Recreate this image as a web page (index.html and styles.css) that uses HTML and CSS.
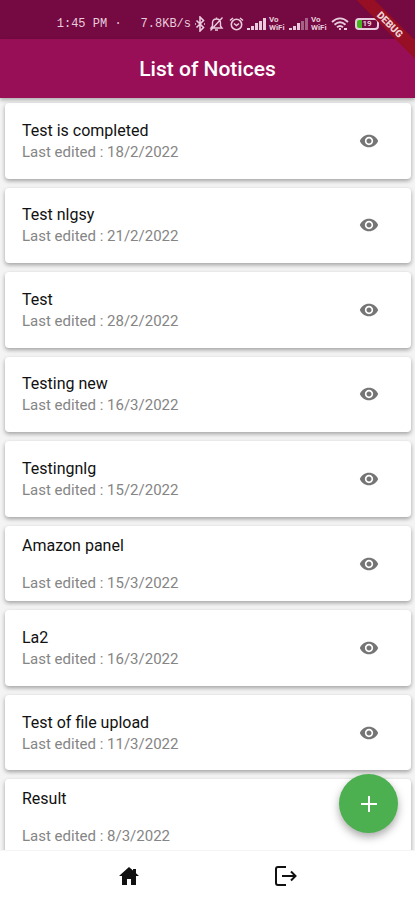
FILE: index.html
```html
<!DOCTYPE html>
<html lang="en">
<head>
  <meta charset="UTF-8">
  <meta name="viewport" content="width=device-width, initial-scale=1">
  <title>List of Notices</title>
  <link rel="stylesheet" href="styles.css">
</head>
<body>
  <!-- shared icons -->
  <svg class="sprite" aria-hidden="true">
    <symbol id="eye" viewBox="0 0 24 24">
      <path d="M12 4.5C7 4.5 2.73 7.61 1 12c1.73 4.39 6 7.5 11 7.5s9.27-3.11 11-7.5c-1.73-4.39-6-7.5-11-7.5zM12 17c-2.76 0-5-2.24-5-5s2.24-5 5-5 5 2.24 5 5-2.24 5-5 5zm0-8c-1.66 0-3 1.34-3 3s1.34 3 3 3 3-1.34 3-3-1.34-3-3-3z"/>
    </symbol>
  </svg>

  <div class="status-bar">
    <span class="clock">1:45 PM ·</span>
    <span class="speed">7.8KB/s</span>
    <svg class="bluetooth" width="12" height="16" viewBox="0 0 12 16" fill="none" stroke="currentColor" stroke-width="1.6">
      <path d="M2.5 4.5l7 7L6 15V1l3.500 3.500-7 7M1 8h1M10 8h1"/>
    </svg>
    <svg width="15" height="16" viewBox="0 0 15 16" fill="none" stroke="currentColor" stroke-width="1.400">
      <path d="M2 12h11l-1.500-2V7c0-2.500-1.500-4-4-4s-4 1.500-4 4v3zM7.500 1.500V3M6 14h3M1.500 14.500l12-13"/>
    </svg>
    <svg class="alarm" width="15" height="16" viewBox="0 0 15 16" fill="none" stroke="currentColor" stroke-width="1.600">
      <circle cx="7.500" cy="8.500" r="5.200"/>
      <path d="M1 4.500L4 2M14 4.500L11 2M5 7.500l2.500 2 2.500-2"/>
    </svg>
    <svg width="19" height="14" viewBox="0 0 19 14" fill="currentColor">
      <path d="M0 11h3v2H0zM4 9h3v4H4zM8 6h3v7H8zM12 4h3v9h-3zM16 1h3v12h-3z"/>
    </svg>
    <span class="vo">Vo<br>WiFi</span>
    <svg width="19" height="14" viewBox="0 0 19 14" fill="currentColor">
      <path d="M0 11h3v2H0zM4 9h3v4H4zM8 6h3v7H8z"/>
      <path d="M12 4h3v9h-3zM16 1h3v12h-3z" opacity=".45"/>
    </svg>
    <span class="vo">Vo<br>WiFi</span>
    <svg class="wifi" width="18" height="14" viewBox="0 0 18 14" fill="none" stroke="currentColor" stroke-width="1.900">
      <path d="M1 5c5-4.700 11-4.700 16 0M3.500 7.800c3.500-3.200 7.500-3.200 11 0M6 10.300c2-1.700 4-1.700 6 0"/>
      <path d="M9 11v2M13 12h3"/>
    </svg>
    <span class="battery">19</span>
  </div>
  <div class="debug"><span>DEBUG</span></div>

  <header class="app-bar">
    <h1>List of Notices</h1>
  </header>

  <main>
    <ul class="notices">
      <li class="card">
        <div class="text"><h2>Test is completed</h2><p>Last edited : 18/2/2022</p></div>
        <button class="view" aria-label="View notice"><svg><use href="#eye"/></svg></button>
      </li>
      <li class="card">
        <div class="text"><h2>Test nlgsy</h2><p>Last edited : 21/2/2022</p></div>
        <button class="view" aria-label="View notice"><svg><use href="#eye"/></svg></button>
      </li>
      <li class="card">
        <div class="text"><h2>Test</h2><p>Last edited : 28/2/2022</p></div>
        <button class="view" aria-label="View notice"><svg><use href="#eye"/></svg></button>
      </li>
      <li class="card">
        <div class="text"><h2>Testing new</h2><p>Last edited : 16/3/2022</p></div>
        <button class="view" aria-label="View notice"><svg><use href="#eye"/></svg></button>
      </li>
      <li class="card">
        <div class="text"><h2>Testingnlg</h2><p>Last edited : 15/2/2022</p></div>
        <button class="view" aria-label="View notice"><svg><use href="#eye"/></svg></button>
      </li>
      <li class="card spaced">
        <div class="text"><h2>Amazon panel</h2><p>Last edited : 15/3/2022</p></div>
        <button class="view" aria-label="View notice"><svg><use href="#eye"/></svg></button>
      </li>
      <li class="card">
        <div class="text"><h2>La2</h2><p>Last edited : 16/3/2022</p></div>
        <button class="view" aria-label="View notice"><svg><use href="#eye"/></svg></button>
      </li>
      <li class="card">
        <div class="text"><h2>Test of file upload</h2><p>Last edited : 11/3/2022</p></div>
        <button class="view" aria-label="View notice"><svg><use href="#eye"/></svg></button>
      </li>
      <li class="card spaced">
        <div class="text"><h2>Result</h2><p>Last edited : 8/3/2022</p></div>
      </li>
    </ul>
    <button class="fab" aria-label="Add notice">
      <svg width="16" height="16" viewBox="0 0 16 16" stroke="currentColor" stroke-width="2"><path d="M8 0v16M0 8h16"/></svg>
    </button>
  </main>

  <nav class="bottom-nav">
    <a href="#home" aria-label="Home">
      <svg width="26" height="26" viewBox="0 0 26 26" fill="currentColor">
        <path d="M13 4L3 13h3v9h5v-6h4v6h5v-9h3l-3-2.700V6h-3v1.600z"/>
      </svg>
    </a>
    <a href="#logout" aria-label="Log out">
      <svg width="26" height="26" viewBox="0 0 26 26" fill="none" stroke="currentColor" stroke-width="2">
        <path d="M13 4H5q-2 0-2 2v14q0 2 2 2h8M9 13h13M18 8.500l4.500 4.500-4.500 4.500"/>
      </svg>
    </a>
  </nav>
</body>
</html>
```
FILE: styles.css
```css
* { box-sizing: border-box; margin: 0; padding: 0; }
body {
  position: relative; height: 100vh; display: flex; flex-direction: column; overflow: hidden;
  font-family: Roboto, sans-serif; background: #f4f4f4; color: #111;
}
button { border: 0; background: none; cursor: pointer; }
svg { display: block; flex: none; }
.sprite { position: absolute; width: 0; height: 0; }

.status-bar {
  display: flex; align-items: center; justify-content: flex-end; gap: 3px;
  height: 39px; padding: 9px 36px 0 0; background: #740a41; color: #e8cbdc;
}
.clock, .speed { font: 12px "Liberation Mono", monospace; white-space: pre; }
.clock { margin-right: 16px; }
.alarm { margin-left: 2px; }
.vo { width: 17px; font-size: 8px; font-weight: 700; line-height: 8px; }
.battery {
  width: 24px; height: 12px; margin-left: 3px; border: 2px solid #e8cbdc; border-radius: 4px;
  text-align: center; font-size: 8px; font-weight: 700; line-height: 8px;
  background: linear-gradient(90deg, #45b51f 5px, transparent 5px);
}

/* corner ribbon */
.debug { position: absolute; top: 0; right: 0; width: 64px; height: 64px; overflow: hidden; z-index: 3; }
.debug span {
  position: absolute; top: 18px; right: -32px; width: 114px; transform: rotate(45deg);
  background: #960f24; color: #ecd3d6; text-align: center; font-size: 10px; font-weight: 900; line-height: 13px;
}

.app-bar {
  display: flex; align-items: center; justify-content: center; height: 59px; z-index: 2;
  background: #990f57; color: #fff; box-shadow: 0 2px 4px rgba(0,0,0,0.3);
}
.app-bar h1 { font-size: 21px; font-weight: 500; }

main { position: relative; flex: 1; min-height: 0; overflow: hidden; }
.notices {
  display: grid; grid-auto-rows: 1fr; gap: 9px; height: 100%; margin: 5px 4px 0 5px; list-style: none;
}
.card {
  display: flex; align-items: center; justify-content: space-between; padding: 0 32px 0 17px;
  background: #fff; border-radius: 4px; box-shadow: 0 2px 4px rgba(0,0,0,0.34);
}
.text { display: grid; gap: 1px; padding-top: 1px; }
.spaced .text { gap: 17px; }
.text h2 { font-size: 16px; font-weight: 400; line-height: 20px; }
.text p { font-size: 15px; line-height: 20px; color: #858585; }
.view { color: #757575; }
.view svg { width: 20px; height: 20px; fill: currentColor; }

.fab {
  position: absolute; right: 17px; bottom: 17px; width: 59px; height: 59px; border-radius: 50%;
  display: flex; align-items: center; justify-content: center;
  background: #4caf50; color: #fff; box-shadow: 0 4px 8px rgba(0,0,0,0.34);
}

.bottom-nav {
  display: flex; justify-content: space-between; align-items: center; height: 50px; padding: 0 28%;
  background: #fff; border-top: 1px solid #f5f5f5;
}
.bottom-nav a { color: #111; }
```
